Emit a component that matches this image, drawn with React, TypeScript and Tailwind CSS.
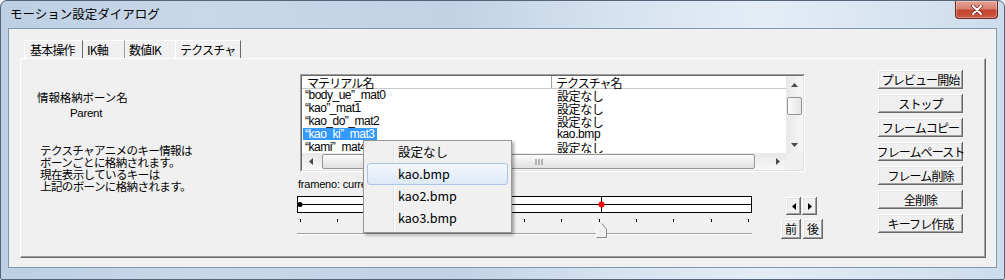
import React from "react";

const JP = "font-['Noto_Sans_CJK_JP',sans-serif]";
const LAT = "font-['Liberation_Sans','Noto_Sans_CJK_JP',sans-serif]";
const RAISED =
  "bg-[#f0f0f0] shadow-[inset_-1px_-1px_0_#696969,inset_1px_1px_0_#ffffff,inset_-2px_-2px_0_#a0a0a0,inset_2px_2px_0_#e3e3e3]";

function Tri({ dir, color = "#4a4a4a" }: { dir: "up" | "down" | "left" | "right"; color?: string }) {
  const v = dir === "up" || dir === "down";
  const w = v ? 7 : 4;
  const h = v ? 4 : 7;
  const pts = {
    up: "0,4 3.5,0 7,4",
    down: "0,0 7,0 3.5,4",
    left: "4,0 4,7 0,3.5",
    right: "0,0 0,7 4,3.5",
  }[dir];
  return (
    <svg width={w} height={h} viewBox={`0 0 ${w} ${h}`}>
      <polygon points={pts} fill={color} />
    </svg>
  );
}

const rows: [string, string][] = [
  ["“body_ue”_mat0", "設定なし"],
  ["“kao”_mat1", "設定なし"],
  ["“kao_do”_mat2", "設定なし"],
  ["“kao_ki”_mat3", "kao.bmp"],
  ["“kami”_mat4", "設定なし"],
];

const buttons = ["プレビュー開始", "ストップ", "フレームコピー", "フレームペースト", "フレーム削除", "全削除", "キーフレ作成"];

const ticks = Array.from({ length: 13 }, (_, i) => 3 + Math.round(i * 37.33));

export default function App() {
  return (
    <div className="relative w-[1005px] h-[280px] bg-[#eef3f8] overflow-hidden">
      <div className="w-[1005px] h-[280px] flex flex-col rounded-t-[7px] rounded-b-[2px] border border-[#53657a] bg-[linear-gradient(90deg,#bccfe3_0%,#c9d8e9_20%,#c1d2e5_45%,#d7e3f0_62%,#e4edf6_76%,#cddcec_100%)]">
        {/* title bar */}
        <div className="h-[27px] shrink-0 flex items-start">
          <div className={`pl-[9px] pt-[4px] text-[12.5px] leading-[18px] text-black ${JP}`}>モーション設定ダイアログ</div>
          <div className="ml-auto mr-[6px] w-[43px] h-[18px] rounded-b-[4px] border border-t-0 border-[#6b2a22] bg-[linear-gradient(180deg,#e6a497_0%,#d7806f_45%,#c2452f_55%,#cc5a43_100%)] shadow-[inset_0_0_0_1px_rgba(255,255,255,0.3)] flex items-center justify-center">
            <svg width="12" height="10" viewBox="0 0 12 10">
              <path d="M2 1 L10 9 M10 1 L2 9" stroke="#7a2d22" strokeWidth="3.6" strokeLinecap="round" />
              <path d="M2 1 L10 9 M10 1 L2 9" stroke="#ffffff" strokeWidth="2" strokeLinecap="round" />
            </svg>
          </div>
        </div>

        {/* client area */}
        <div className={`mx-[7px] h-[240px] shrink-0 border border-[#8195ab] bg-[#f0f0f0] ${JP}`}>
          {/* tabs */}
          <div className="mt-[11px] ml-[15px] h-[18px] flex text-[12px] leading-[17px] text-black">
            <div className="w-[59px] h-[18px] border-t border-l border-r border-t-white border-l-white border-r-[#696969] pl-[5px] tracking-[-0.8px]">基本操作</div>
            <div className="w-[42px] h-[18px] border-t border-r border-t-white border-r-[#a0a0a0] pl-[4px] tracking-[-0.8px]">IK軸</div>
            <div className="w-[50px] h-[18px] border-t border-t-white pl-[4px] tracking-[-0.8px]">数値IK</div>
            <div className="w-[66px] h-[18px] border-t border-l border-r border-t-white border-l-white border-r-[#696969] pl-[4px] tracking-[-0.8px] bg-[#f0f0f0]">テクスチャ</div>
          </div>

          {/* tab page */}
          <div className="ml-[11px] w-[966px] h-[200px] border border-t-white border-l-white border-r-[#696969] border-b-[#696969] shadow-[inset_-1px_-1px_0_#a0a0a0] flex">
            {/* left info */}
            <div className="w-[276px] shrink-0 pl-[16px] pt-[32px] text-[11.5px] leading-[12px] text-black">
              <div className="h-[12px] tracking-[-0.1px]">情報格納ボーン名</div>
              <div className={`h-[12px] mt-[4px] pl-[33px] text-[11.5px] tracking-[-0.3px] ${LAT}`}>Parent</div>
              <div className="mt-[25px] pl-[3px] tracking-[-0.6px]">
                <div className="h-[12px]">テクスチャアニメのキー情報は</div>
                <div className="h-[12px]">ボーンごとに格納されます。</div>
                <div className="h-[12px]">現在表示しているキーは</div>
                <div className="h-[12px]">上記のボーンに格納されます。</div>
              </div>
            </div>

            {/* middle */}
            <div className="flex flex-col pt-[15px] shrink-0">
              {/* list view */}
              <div className="ml-[3px] w-[505px] h-[98px] border border-t-[#a0a0a0] border-l-[#a0a0a0] border-r-white border-b-white">
                <div className="w-full h-full border border-t-[#696969] border-l-[#696969] border-r-[#e3e3e3] border-b-[#e3e3e3] bg-white grid grid-cols-[1fr_17px] grid-rows-[1fr_17px] overflow-hidden">
                  <div className="overflow-hidden">
                    <div className="h-[13px] flex border-b border-[#c8c8c8] text-[12px] leading-[13px] text-black">
                      <div className="w-[250px] border-r border-[#a0a0a0] pl-[5px] tracking-[-0.9px]">マテリアル名</div>
                      <div className="pl-[4px] tracking-[-1px]">テクスチャ名</div>
                    </div>
                    {rows.map(([m, t], i) => (
                      <div key={i} className="h-[13px] flex leading-[13px] text-black">
                        <div className={`w-[250px] pl-[1px] text-[12px] tracking-[-0.5px] ${LAT}`}>
                          <span className={i === 3 ? "bg-[#3399ff] text-white px-[2px] inline-block h-[12px] leading-[12px]" : "px-[2px]"}>{m}</span>
                        </div>
                        <div className={`pl-[5px] text-[12px] tracking-[-0.4px] ${t === "kao.bmp" ? LAT : ""}`}>{t}</div>
                      </div>
                    ))}
                  </div>
                  {/* vertical scrollbar */}
                  <div className="flex flex-col items-center bg-[linear-gradient(90deg,#e8e8e8,#f7f7f7)]">
                    <div className="h-[17px] w-full flex items-center justify-center"><Tri dir="up" /></div>
                    <div className="mt-[4px] w-[15px] h-[18px] rounded-[2px] border border-[#959595] bg-[linear-gradient(90deg,#fbfbfb,#e4e4e4)]" />
                    <div className="flex-1" />
                    <div className="h-[17px] w-full flex items-center justify-center"><Tri dir="down" /></div>
                  </div>
                  {/* horizontal scrollbar */}
                  <div className="flex items-center bg-[linear-gradient(180deg,#e8e8e8,#f7f7f7)]">
                    <div className="w-[17px] h-[17px] flex items-center justify-center"><Tri dir="left" /></div>
                    <div className="ml-[3px] w-[433px] h-[15px] rounded-[2px] border border-[#959595] bg-[linear-gradient(180deg,#fbfbfb,#e0e0e0)] flex items-center justify-center">
                      <svg width="8" height="6" viewBox="0 0 8 6">
                        <path d="M1 0 V6 M4 0 V6 M7 0 V6" stroke="#7a7a7a" strokeWidth="1" />
                      </svg>
                    </div>
                    <div className="flex-1" />
                    <div className="w-[17px] h-[17px] flex items-center justify-center"><Tri dir="right" /></div>
                  </div>
                  <div className="bg-[#f0f0f0]" />
                </div>
              </div>

              <div className={`mt-[6px] ml-[1px] h-[12px] leading-[12px] text-[11px] tracking-[-0.2px] text-black ${LAT}`}>frameno: current 0</div>

              <div className="mt-[6px] flex">
                <svg width="456" height="43" viewBox="0 0 456 43" className="shrink-0">
                  <rect x="0.5" y="0.5" width="454" height="16" fill="#ffffff" stroke="#000000" />
                  <line x1="0" y1="8.5" x2="455" y2="8.5" stroke="#000000" />
                  <line x1="304.5" y1="0" x2="304.5" y2="17" stroke="#000000" />
                  <circle cx="3" cy="8.5" r="2.5" fill="#000000" />
                  <circle cx="304.5" cy="8.5" r="3" fill="#ff0000" />
                  {ticks.map((x) => (
                    <line key={x} x1={x + 0.5} y1="23" x2={x + 0.5} y2="26" stroke="#000000" />
                  ))}
                  <line x1="0" y1="37.5" x2="455" y2="37.5" stroke="#a0a0a0" />
                  <line x1="0" y1="38.5" x2="455" y2="38.5" stroke="#ffffff" />
                  <polygon points="299.5,33 304.5,27.5 309.5,33 309.5,41.5 299.5,41.5" fill="#f0f0f0" />
                  <polyline points="299.5,41.5 299.5,33 304.5,27.5" fill="none" stroke="#ffffff" />
                  <polyline points="304.5,27.5 309.5,33 309.5,41.5 299.5,41.5" fill="none" stroke="#8a8a8a" />
                </svg>
                <div className="ml-[28px] mt-[1px] flex flex-col">
                  <div className="ml-[5px] flex gap-[1px]">
                    <div className={`w-[15px] h-[18px] flex items-center justify-center ${RAISED}`}><Tri dir="left" color="#000" /></div>
                    <div className={`w-[15px] h-[18px] flex items-center justify-center ${RAISED}`}><Tri dir="right" color="#000" /></div>
                  </div>
                  <div className="mt-[4px] flex gap-[2px] text-[12px] leading-[12px] text-black">
                    <div className={`w-[20px] h-[20px] flex items-center justify-center ${RAISED}`}>前</div>
                    <div className={`w-[20px] h-[20px] flex items-center justify-center ${RAISED}`}>後</div>
                  </div>
                </div>
              </div>
            </div>

            {/* right buttons */}
            <div className="ml-[55px] pt-[11px] flex flex-col gap-[5px] shrink-0">
              {buttons.map((b) => (
                <div key={b} className={`w-[85px] h-[19px] flex items-center justify-center whitespace-nowrap text-[12px] leading-[12px] tracking-[-0.9px] text-black ${RAISED}`}>
                  {b}
                </div>
              ))}
            </div>
          </div>
        </div>
      </div>

      {/* context menu */}
      <div className={`absolute left-[363px] top-[140px] w-[149px] h-[93px] border border-[#979797] bg-[#f0f0f0] shadow-[2px_2px_3px_rgba(0,0,0,0.35)] text-[12.5px] text-black ${JP}`}>
        <div className="absolute left-[29px] top-[1px] bottom-[1px] w-[1px] bg-[#e2e3e3]" />
        <div className="absolute left-[30px] top-[1px] bottom-[1px] w-[1px] bg-white" />
        <div className="relative flex flex-col">
          <div className="mx-[3px] h-[22px] border border-transparent pl-[30px] flex items-center">設定なし</div>
          <div className="mx-[3px] h-[22px] border border-[#a9c6e5] rounded-[3px] bg-[linear-gradient(180deg,#f3f8fd,#dde9f6)] pl-[30px] flex items-center">kao.bmp</div>
          <div className="mx-[3px] h-[22px] border border-transparent pl-[30px] flex items-center">kao2.bmp</div>
          <div className="mx-[3px] h-[22px] border border-transparent pl-[30px] flex items-center">kao3.bmp</div>
        </div>
      </div>
    </div>
  );
}
